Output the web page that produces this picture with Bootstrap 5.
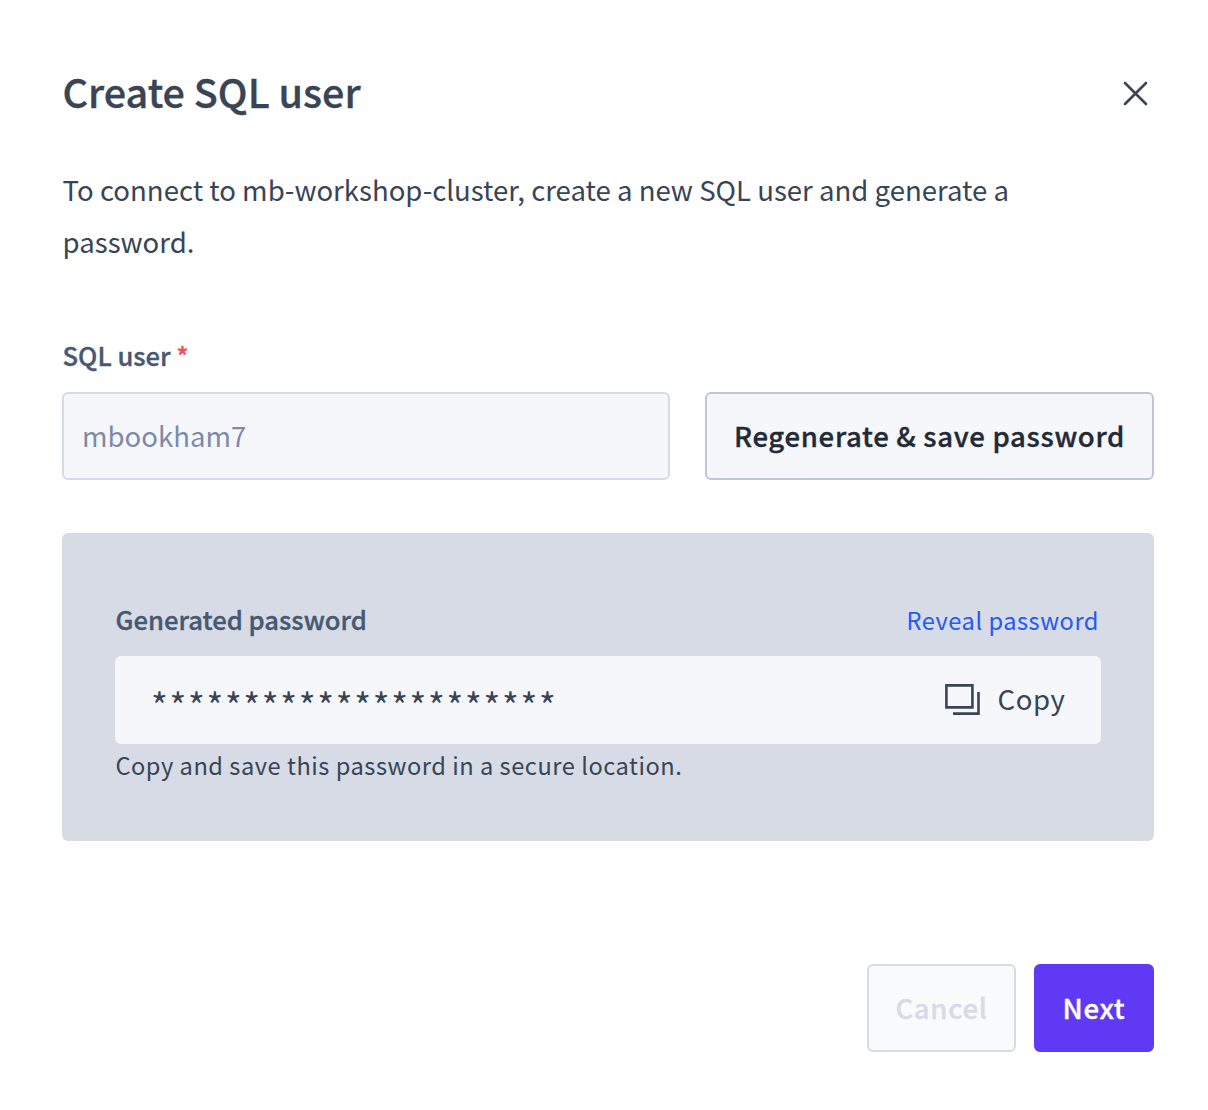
<!DOCTYPE html>
<html lang="en">
<head>
<meta charset="utf-8">
<meta name="viewport" content="width=device-width, initial-scale=1">
<title>Create SQL user</title>
<link href="https://cdn.jsdelivr.net/npm/bootstrap@5.3.0/dist/css/bootstrap.min.css" rel="stylesheet">
<style>
body{font-family:"Noto Sans CJK SC","Noto Sans CJK JP","Noto Sans",sans-serif;color:#394455;background:#fff;font-size:27.57px;}
.dialog-body{padding:61px 54px 0 62px;}
.semi{font-weight:500;-webkit-text-stroke:.35px currentColor;}
.dialog-title{font-size:39.5px;line-height:60px;color:#394455;padding-left:.6px;}
.close-x{width:25px;height:25px;margin:4px 6px 0 0;}
.intro{line-height:52px;margin-top:42px;margin-bottom:70px;padding-left:.6px;}
.field-label{font-size:25.62px;line-height:36px;color:#475872;padding-left:.5px;}
.req{color:#f04e58;}
.user-row{gap:35px;margin-top:19px;}
.user-input{height:88px;border:2px solid #d6dbe7;border-radius:6px;background:#f5f7fb;color:#7e89a9;padding:0 18px;}
.btn-lgx{height:88px;border-width:2px;border-radius:6px;font-size:27.57px;letter-spacing:.67px;padding:0;}
.btn-regen{width:449px;background:#f5f7fb;border-color:#c0c6d9;color:#242a35;}
.btn-cancel,.btn-cancel:disabled{width:149px;background:#f9fafc;border-color:#d6dbe7;color:#d8dae7;opacity:1;}
.btn-next{width:120px;background:#6039f4;border-color:#6039f4;color:#fff;}
.pw-panel{margin-top:53px;height:308px;border-radius:6px;background:#d6dbe6;padding:68px 53px 0;}
.reveal{font-size:23.63px;line-height:36px;letter-spacing:.52px;color:#2459f5;margin-right:2px;padding-top:1px;text-decoration:none;}
.pw-box{height:88px;margin-top:18px;border-radius:6px;background:#f5f7fb;padding:0 35.5px 4px 36px;}
.stars{font-size:36px;line-height:40px;letter-spacing:1.66px;margin-top:11px;}
.copy-btn{gap:17px;letter-spacing:.6px;line-height:40px;}
.copy-btn svg{margin-top:3px;}
.hint{font-size:23.63px;line-height:36px;letter-spacing:.53px;margin-top:3px;padding-left:.4px;}
.actions{gap:18px;margin-top:123px;}
</style>
</head>
<body>
<main class="dialog-body">
  <header class="d-flex justify-content-between align-items-center">
    <h1 class="dialog-title semi mb-0">Create SQL user</h1>
    <svg class="close-x" viewBox="0 0 25 25" fill="none" stroke="#394455" stroke-width="2.6" stroke-linecap="round" role="img" aria-label="Close"><path d="M2 2l21 21M23 2l-21 21"/></svg>
  </header>
  <p class="intro">To connect to mb-workshop-cluster, create a new SQL user and generate a<br>password.</p>
  <div class="field-label semi" id="userLabel">SQL user <span class="req">*</span></div>
  <div class="user-row d-flex">
    <div class="user-input flex-grow-1 d-flex align-items-center" aria-labelledby="userLabel">mbookham7</div>
    <button class="btn btn-lgx btn-regen semi" type="button">Regenerate &amp; save password</button>
  </div>
  <section class="pw-panel">
    <div class="d-flex justify-content-between">
      <span class="field-label semi">Generated password</span>
      <a class="reveal" href="#">Reveal password</a>
    </div>
    <div class="pw-box d-flex align-items-center justify-content-between">
      <span class="stars">**********************</span>
      <span class="copy-btn d-flex align-items-center"><svg width="35" height="31" viewBox="0 0 35 31" fill="none" stroke="#394455" stroke-width="2.6"><path d="M1.400 1.400h26v22h-26zM33.500 8v21.600H8"/></svg>Copy</span>
    </div>
    <div class="hint">Copy and save this password in a secure location.</div>
  </section>
  <footer class="actions d-flex justify-content-end">
    <button class="btn btn-lgx btn-cancel semi" type="button" disabled>Cancel</button>
    <button class="btn btn-lgx btn-next semi" type="button">Next</button>
  </footer>
</main>
<script src="https://cdn.jsdelivr.net/npm/bootstrap@5.3.0/dist/js/bootstrap.bundle.min.js"></script>
</body>
</html>
